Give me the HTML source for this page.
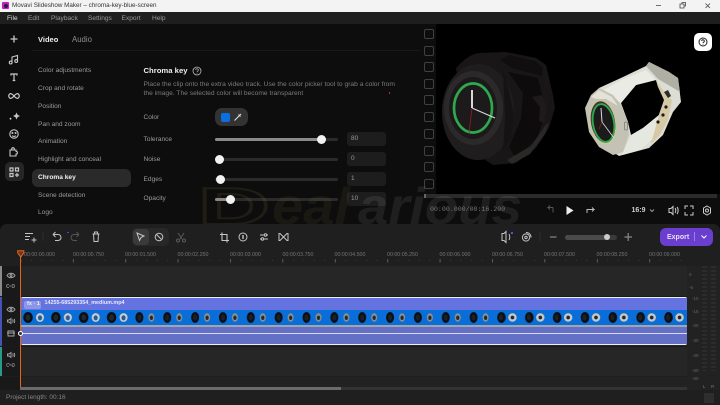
<!DOCTYPE html>
<html><head><meta charset="utf-8"><style>
html,body{margin:0;padding:0;background:#0d0d0d;}
body{width:720px;height:405px;position:relative;overflow:hidden;font-family:"Liberation Sans",sans-serif;}
.a{position:absolute;white-space:nowrap;line-height:1;}
.m{font-size:6.6px;color:#9a9a9a;margin-top:1px;}
.l{font-size:6.6px;color:#9a9a9a;margin-top:1px;}
.v{position:absolute;left:347px;width:39px;height:14px;background:#1d1d1d;border-radius:3px;color:#999;font-size:6.5px;line-height:14px;text-indent:4px;}
.t{position:absolute;left:215px;width:123px;height:3px;background:#2b2b2b;border-radius:2px;}
.f{position:absolute;left:215px;height:3px;background:#8a8a8a;border-radius:2px;}
.k{position:absolute;width:9px;height:9px;border-radius:50%;background:#f2f2f2;}
.c{position:absolute;left:423.5px;width:8px;height:8px;border:1px solid #404040;border-radius:2px;}
.r{position:absolute;top:252px;font-size:5.3px;color:#747474;line-height:7px;white-space:nowrap;}
.u{position:absolute;font-size:4.5px;color:#666;line-height:5px;white-space:nowrap;}
svg{position:absolute;overflow:visible;}
</style></head><body>
<!-- title bar -->
<div class="a" style="left:0;top:0;width:720px;height:12px;background:#f3f3f3;"></div>
<div class="a" style="left:2px;top:2px;width:7px;height:7px;background:#c020c0;border-radius:1px;"></div>
<div class="a" style="left:3.5px;top:3.5px;width:4px;height:4px;background:#3a1050;border-radius:50%;"></div>
<div class="a" style="left:12px;top:3px;font-size:6.3px;color:#333;">Movavi Slideshow Maker – chroma-key-blue-screen</div>
<svg style="left:0;top:0" width="720" height="12"><path d="M656 5.5h5M680 4h4v4h-4zM682 4v-1.500h3.500v3.500h-1.500M705.500 3.500l4.500 4.500M710 3.500l-4.500 4.500" fill="none" stroke="#444" stroke-width=".8"/></svg>
<!-- menu -->
<div class="a" style="left:0;top:12px;width:720px;height:12px;background:#1e1e1e;"></div>
<div class="a m" style="left:7px;top:15px;color:#ddd;">File</div>
<div class="a m" style="left:28px;top:15px;">Edit</div>
<div class="a m" style="left:51px;top:15px;">Playback</div>
<div class="a m" style="left:88px;top:15px;">Settings</div>
<div class="a m" style="left:121.5px;top:15px;">Export</div>
<div class="a m" style="left:152px;top:15px;">Help</div>
<!-- sidebar -->
<div class="a" style="left:5px;top:162px;width:19px;height:19px;background:#262626;border-radius:5px;"></div>
<svg style="left:0;top:24px" width="30" height="165" fill="none" stroke="#c8c8c8" stroke-width="1.1">
<path d="M10.5 15h7M14 11.500v7" stroke-width="1.3"/>
<path d="M12 38.500v-5.500l5.500-1.500v5.500"/><circle cx="10.700" cy="38.500" r="1.400"/><circle cx="16.200" cy="37" r="1.400"/>
<path d="M11 51.500v-1.500h6v1.500M14 50v6.500M12.700 56.500h2.600" stroke-width="1.2"/>
<path d="M14 72c-2-2.500-3.500-2.800-4.500-1.800s-1 2.600 0 3.600 2.500.7 4.500-1.800c2-2.500 3.500-2.800 4.500-1.800s1 2.600 0 3.600-2.500.7-4.500-1.800z" stroke-width="1.2"/>
<path d="M16.500 88.500l1.100 2.400 2.400 1.100-2.400 1.100-1.100 2.400-1.100-2.400-2.400-1.100 2.400-1.100zM10.500 93.500l1.200 1.200-1.200 1.200-1.200-1.200z" fill="#c8c8c8" stroke="none"/>
<circle cx="14" cy="110" r="4.200"/><circle cx="12.400" cy="109" r=".5" fill="#c8c8c8"/><circle cx="15.600" cy="109" r=".5" fill="#c8c8c8"/><path d="M12.200 111.700c1 1 2.600 1 3.600 0"/>
<path d="M10 126h6v1.300a1.400 1.400 0 0 1 0 2.800v1.900h-6zM11.700 126v-1a1.300 1.300 0 0 1 2.600 0v1"/>
<path d="M10 144h3v3h-3zM15.500 144h3v3h-3zM10 149.500h3v3h-3zM17 149v4M15 151h4" stroke-width="1.200"/>
</svg>
<!-- tabs -->
<div class="a" style="left:38px;top:35.5px;font-size:7.5px;font-weight:bold;color:#eee;">Video</div>
<div class="a" style="left:72px;top:35.5px;font-size:7.8px;color:#8e8e8e;">Audio</div>
<div class="a" style="left:32px;top:50px;width:388px;height:1px;background:#191919;"></div>
<!-- list -->
<div class="a" style="left:32px;top:169px;width:99px;height:17.5px;background:#2a2a2a;border-radius:6px;"></div>
<div class="a l" style="left:38px;top:67px;">Color adjustments</div>
<div class="a l" style="left:38px;top:85px;">Crop and rotate</div>
<div class="a l" style="left:38px;top:103px;">Position</div>
<div class="a l" style="left:38px;top:120.5px;">Pan and zoom</div>
<div class="a l" style="left:38px;top:138px;">Animation</div>
<div class="a l" style="left:38px;top:156px;">Highlight and conceal</div>
<div class="a l" style="left:38px;top:174px;color:#eee;font-weight:bold;">Chroma key</div>
<div class="a l" style="left:38px;top:192px;">Scene detection</div>
<div class="a l" style="left:38px;top:209px;">Logo</div>
<!-- chroma panel -->
<div class="a" style="left:143.5px;top:67px;font-size:7.7px;font-weight:bold;color:#eee;">Chroma key</div>
<svg style="left:191.5px;top:66px" width="10" height="10" fill="none" stroke="#bbb" stroke-width=".8"><circle cx="5" cy="5" r="4"/><path d="M3.700 4a1.300 1.300 0 1 1 1.900 1.200c-.5.300-.6.500-.6 1M5 7.300v.5"/></svg>
<div class="a" style="left:143.5px;top:82px;font-size:6.68px;color:#7b7b7b;">Place the clip onto the extra video track. Use the color picker tool to grab a color from</div>
<div class="a" style="left:143.5px;top:91px;font-size:6.68px;color:#7b7b7b;">the image. The selected color will become transparent</div>
<div class="a" style="left:389px;top:92px;width:1px;height:1.5px;background:#c22;"></div>
<div class="a l" style="left:143.5px;top:113.5px;">Color</div>
<div class="a" style="left:215px;top:108px;width:33px;height:18px;background:#333;border-radius:7px;"></div>
<div class="a" style="left:221px;top:113px;width:8.5px;height:8.5px;background:#0a6fe0;border-radius:2px;"></div>
<svg style="left:233px;top:112px" width="10" height="10" fill="none" stroke="#ddd" stroke-width="1.1"><path d="M1.500 8.500l5-5M5.500 2.500l2 2M6.500 3.500l1.500-1.500"/></svg>
<div class="a l" style="left:143.5px;top:135.5px;">Tolerance</div>
<div class="a l" style="left:143.5px;top:155.5px;">Noise</div>
<div class="a l" style="left:143.5px;top:175.5px;">Edges</div>
<div class="a l" style="left:143.5px;top:195px;">Opacity</div>
<div class="t" style="top:137.5px"></div><div class="f" style="top:137.5px;width:106px"></div><div class="k" style="left:317px;top:134.5px"></div>
<div class="t" style="top:157.5px"></div><div class="k" style="left:214.5px;top:154.5px"></div>
<div class="t" style="top:177.5px"></div><div class="k" style="left:215.5px;top:174.5px"></div>
<div class="t" style="top:197.5px"></div><div class="f" style="top:197.5px;width:15px"></div><div class="k" style="left:226px;top:194.5px"></div>
<div class="v" style="top:132px">80</div><div class="v" style="top:152px">0</div><div class="v" style="top:172px">1</div><div class="v" style="top:192px">10</div>
<!-- film strip -->
<div class="c" style="top:28.5px"></div><div class="c" style="top:45.5px"></div><div class="c" style="top:62px"></div><div class="c" style="top:78.5px"></div><div class="c" style="top:95px"></div><div class="c" style="top:112px"></div><div class="c" style="top:128.5px"></div><div class="c" style="top:145.5px"></div><div class="c" style="top:162px"></div><div class="c" style="top:179px"></div>
<!-- preview -->
<div class="a" style="left:436px;top:24px;width:284px;height:170px;background:#000;"></div>
<svg style="left:0;top:0" width="720" height="200">
 <!-- dark watch strap -->
 <path d="M456 68C465 58 472 54 479 53L506 52 536 58 546 65 553 95 555 108 549 128 536 148 516 163 493 165 470 150z" fill="#181617"/>
 <path d="M500 60l9-5 26 6 8 7-1 8-30-8z" fill="#100e0f"/>
 <path d="M508 72l30 6 6 24 1 14-8 22-14 14-8 5-6-10 12-28 2-26z" fill="#0d0b0c"/>
 <path d="M507 160l24-14 14-20 4-4-4 12-15 20-18 10z" fill="#2a2927"/>
 <path d="M532 97l10-2 5 12-3 16-5-2 1-14z" fill="#1e1a1b"/>
 <!-- dark watch case -->
 <ellipse cx="478" cy="112" rx="36" ry="48" fill="#1f1d1e"/>
 <path d="M503 70l6 22 5 22-3 24-8 12 2-30-1-26z" fill="#151314"/>
 <ellipse cx="473.500" cy="108" rx="29.500" ry="37" fill="#2b292a"/>
 <ellipse cx="473" cy="108" rx="24" ry="31" fill="#1b191a"/>
 <ellipse cx="473" cy="108" rx="19" ry="24.500" fill="#1c1a1b" stroke="#2fa84f" stroke-width="2.700"/>
 <path d="M472 108V90" stroke="#d8d8d8" stroke-width="2"/>
 <path d="M472 108l23 10" stroke="#d8d8d8" stroke-width="1.200"/>
 <path d="M472 108l-3 25" stroke="#b01c20" stroke-width=".7"/>
 <!-- white watch -->
 <path fill-rule="evenodd" d="M599 88L623 77 646 66 649 62 669 72 678 78 681 102 673 112 663 135 649 148 619 156 610 150 599 100zM621 103L628 122 631 135 643 128 659 115 666 95 658 87 656 80 636 85z" fill="#dcddd4"/>
 <path d="M600 92L623 79 646 70 656 80 636 85 621 103 612 95z" fill="#e9ebe4"/>
 <path d="M646 66L649 62 669 72 678 78 680 92 670 86 658 79z" fill="#b0afa4"/>
 <path d="M656 80L666 95 672 100 668 120 660 135 652 143 645 140 657 120 664 100 658 87z" fill="#d7c9a6"/>
 <path d="M631 135L643 128 659 115 652 140 640 150 622 155z" fill="#e4e8de"/>
 <circle cx="666" cy="107" r="1.600" fill="#1a1a1a"/><circle cx="663" cy="115" r="1.600" fill="#1a1a1a"/><circle cx="658" cy="122" r="1.600" fill="#1a1a1a"/>
 <path d="M664 92l4 6 3-2-3-6z" fill="#2c2c2c"/>
 <path d="M585 108L591 95 599 88 613 95 621 105 628 122 629 135 623 152 613 155 599 147 589 132z" fill="#c4c2b4"/>
 <path d="M591 97L599 90 612 97 618 106 606 99 596 99z" fill="#e4e2d6"/>
 <ellipse cx="603" cy="122" rx="13" ry="22.500" transform="rotate(-10 603 122)" fill="#d3c69a"/>
 <ellipse cx="603" cy="122" rx="12" ry="21" transform="rotate(-10 603 122)" fill="#3c3b39"/>
 <ellipse cx="603.500" cy="123" rx="10.500" ry="19" transform="rotate(-10 603.500 123)" fill="#1c1b1b" stroke="#2fa84f" stroke-width="1.800"/>
 <path d="M602 122l-1-14" stroke="#ddd" stroke-width="1"/><path d="M602 122l12 16" stroke="#ddd" stroke-width=".8"/><path d="M602 122l-3 7" stroke="#b01c20" stroke-width=".6"/>
 <rect x="624.500" y="122" width="3" height="8" rx="1.300" fill="none" stroke="#77756c" stroke-width=".7"/>
</svg>
<div class="a" style="left:694px;top:33px;width:18px;height:18px;background:#fff;border-radius:5px;"></div>
<svg style="left:698px;top:37px" width="10" height="10" fill="none" stroke="#222" stroke-width="1"><circle cx="5" cy="5" r="4"/><path d="M3.700 4a1.300 1.300 0 1 1 1.900 1.200c-.5.300-.6.500-.6 1M5 7.200v.6"/></svg>
<!-- progress -->
<div class="a" style="left:424px;top:194px;width:293px;height:4px;background:#2b2b2b;"></div>
<div class="a" style="left:424px;top:194px;width:1.5px;height:4px;background:#666;"></div>
<!-- watermark -->
<svg style="left:0;top:0" width="720" height="224">
 <text x="198" y="224" font-family="Liberation Sans, sans-serif" font-weight="bold" font-size="52" textLength="72" lengthAdjust="spacingAndGlyphs" fill="none" stroke="rgba(150,125,70,.14)" stroke-width="2">D</text>
 <text x="272" y="224" font-family="Liberation Sans, sans-serif" font-weight="bold" font-style="italic" font-size="52" textLength="78" lengthAdjust="spacingAndGlyphs" fill="rgba(150,125,70,.1)">eal</text>
 <text x="358" y="224" font-family="Liberation Sans, sans-serif" font-weight="bold" font-style="italic" font-size="52" textLength="164" lengthAdjust="spacingAndGlyphs" fill="rgba(255,255,255,.08)">arious</text>
</svg>
<div class="a" style="left:430px;top:207px;font-family:'Liberation Mono',monospace;font-size:6.6px;color:#777;">00:00.000/00:16.200</div>
<svg style="left:0;top:200px" width="720" height="22" fill="none" stroke="#888" stroke-width="1">
 <path d="M553 7.500h-5l2-2M548 7.500l2 2M553 7.500v5" stroke="#555"/>
 <path d="M566.500 6l7 4.500-7 4.500z" fill="#eee" stroke="none"/>
 <path d="M587 13v-3.500h7l-2-2M594 9.500l-2 2" stroke="#bbb"/>
 <path d="M650 9.500l2 2 2-2" stroke="#999"/>
 <path d="M669 8.500h2l2-2v8l-2-2h-2zM675 8c1 1 1 4 0 5M677 7c1.500 1.500 1.500 5.500 0 7" stroke="#ccc"/>
 <path d="M685 9v-3h3M690 6h3v3M693 12v3h-3M688 15h-3v-3" stroke="#ccc"/>
 <path d="M707 6l3.500 2v5l-3.500 2-3.500-2v-5z" stroke="#ccc"/><circle cx="707" cy="10.500" r="1.500" stroke="#ccc"/>
</svg>
<div class="a" style="left:631.5px;top:207px;font-size:7px;font-weight:bold;color:#ccc;">16:9</div>
<!-- timeline -->
<div class="a" style="left:0;top:224px;width:720px;height:42px;background:#1f1f1f;border-radius:7px 7px 0 0;"></div>
<div class="a" style="left:132px;top:228px;width:37px;height:18px;background:#282828;border-radius:5px;"></div>
<div class="a" style="left:133px;top:229px;width:15.5px;height:16px;background:#3a3a3a;border-radius:4px;"></div>
<svg style="left:0;top:226px" width="720" height="22" fill="none" stroke="#c4c4c4" stroke-width="1">
 <path d="M25 7.500h8M25 10.500h5M25 13.500h4M31.500 14h5M34 11.500v5"/>
 <path d="M43 6v9" stroke="#2c2c2c"/>
 <path d="M53 8.500h5a3 3 0 0 1 0 6h-3M53 8.500l2.500-2.500M53 8.500l2.500 2.500"/>
 <path d="M79 8.500h-5a3 3 0 0 0 0 6h3M79 8.500l-2.500-2.500M79 8.500l-2.500 2.500" stroke="#555"/>
 <path d="M92.500 8h7M93.500 8l.5 7.500h4l.5-7.500M94.500 8V6h3v2"/>
 <path d="M137 7l7 3-3 1.500-1.500 3z"/>
 <circle cx="159" cy="11" r="3.800"/><path d="M156.500 8.500l5 5"/>
 <path d="M178 7l4 6M184 7l-4 6" stroke="#5a5a5a"/><circle cx="178" cy="14.500" r="1.500" stroke="#5a5a5a"/><circle cx="184" cy="14.500" r="1.500" stroke="#5a5a5a"/>
 <path d="M222 6.500v8h7M220 8.500h7v8" stroke-width="1.100"/>
 <circle cx="243" cy="11" r="4"/><path d="M243 9v4" stroke-width="1.400"/>
 <path d="M260 9h8M260 13h8"/><circle cx="265.500" cy="9" r="1.200" fill="#1f1f1f"/><circle cx="262.500" cy="13" r="1.200" fill="#1f1f1f"/>
 <path d="M283.500 11l-3.500-3.500h-1v7h1zM283.500 11l3.500-3.500h1v7h-1z"/>
 <path d="M504 7.500h-2v7h2l2 2v-11zM509 8c1 1.500 1 4.500 0 6"/>
 <circle cx="526" cy="11.500" r="3.600"/><path d="M526 6.500c3 0 5 2 5 5"/><circle cx="526" cy="11.500" r="1.200"/>
 <path d="M540 6v9" stroke="#2c2c2c"/>
 <path d="M550 11h6.500" stroke="#888" stroke-width="1.200"/>
 <path d="M624.500 11h7.500M628.200 7v8" stroke="#888" stroke-width="1.200"/>
</svg>
<div class="a" style="left:511px;top:232px;width:1.5px;height:1.5px;background:#7a3de0;"></div>
<div class="a" style="left:67px;top:231.5px;width:1.5px;height:1.5px;background:#6a35d8;"></div>
<div class="a" style="left:565px;top:234.5px;width:52px;height:5px;background:#3a3a3a;border-radius:3px;"></div>
<div class="a" style="left:565px;top:234.5px;width:42px;height:5px;background:#4a4a4a;border-radius:3px;"></div>
<div class="a" style="left:604px;top:234px;width:6px;height:6px;background:#ccc;border-radius:3px;"></div>
<div class="a" style="left:660px;top:228px;width:53px;height:18px;background:#6a3fd0;border-radius:6px;"></div>
<div class="a" style="left:667px;top:234px;font-size:7px;font-weight:bold;color:#e8e0fa;">Export</div>
<div class="a" style="left:694px;top:232px;width:.7px;height:9px;background:#9a80e0;"></div>
<svg style="left:700px;top:234px" width="8" height="6" fill="none" stroke="#fff" stroke-width="1"><path d="M1.500 1.500l2.500 2.500 2.500-2.500"/></svg>
<!-- ruler -->
<div class="r" style="left:24px">00:00:00.000</div><div class="r" style="left:73px">00:00:00.750</div><div class="r" style="left:125px">00:00:01.500</div><div class="r" style="left:177.5px">00:00:02.250</div><div class="r" style="left:230px">00:00:03.000</div><div class="r" style="left:282.5px">00:00:03.750</div><div class="r" style="left:334.5px">00:00:04.500</div><div class="r" style="left:387px">00:00:05.250</div><div class="r" style="left:439.5px">00:00:06.000</div><div class="r" style="left:492px">00:00:06.750</div><div class="r" style="left:544px">00:00:07.500</div><div class="r" style="left:596.5px">00:00:08.250</div><div class="r" style="left:649px">00:00:09.000</div>
<svg style="left:0;top:258px" width="690" height="8"><defs><pattern id="tk" x="20.5" width="52.4" height="8" patternUnits="userSpaceOnUse"><rect x="0" y="1" width=".7" height="3.5" fill="#777"/><rect x="10.5" y="2" width=".7" height="1" fill="#444"/><rect x="21" y="2" width=".7" height="1" fill="#444"/><rect x="31.5" y="2" width=".7" height="1" fill="#444"/><rect x="42" y="2" width=".7" height="1" fill="#444"/></pattern></defs><rect x="20" width="670" height="8" fill="url(#tk)"/></svg>
<!-- tracks -->
<div class="a" style="left:0;top:266px;width:720px;height:124px;background:#262626;"></div>
<div class="a" style="left:0;top:266px;width:20px;height:124px;background:#191919;"></div>
<div class="a" style="left:0;top:266px;width:2px;height:30px;background:#8a8a8a;"></div>
<div class="a" style="left:0;top:297px;width:2px;height:49px;background:#4553b8;"></div>
<div class="a" style="left:0;top:347px;width:2px;height:29px;background:#2a9a86;"></div>
<div class="a" style="left:0;top:296px;width:687px;height:1px;background:#1a1a1a;"></div>
<div class="a" style="left:0;top:346px;width:687px;height:1px;background:#1a1a1a;"></div>
<div class="a" style="left:0;top:376px;width:687px;height:1px;background:#1e1e1e;"></div>
<div class="a" style="left:20px;top:377px;width:667px;height:10px;background:#222;"></div>
<svg style="left:0;top:266px" width="20" height="120" fill="none" stroke="#a8a8a8" stroke-width=".9">
 <path d="M7 9.500c2-3 6-3 8 0-2 3-6 3-8 0z"/><circle cx="11" cy="9.500" r="1"/>
 <path d="M9 21.500h-1a1.500 1.500 0 0 1 0-3h1M12 18.500h1a1.500 1.500 0 0 1 0 3h-1M9 20h4" stroke="#777"/>
 <path d="M7 43.500c2-3 6-3 8 0-2 3-6 3-8 0z"/><circle cx="11" cy="43.500" r="1"/>
 <path d="M7.500 54h1.500l2-1.500v5l-2-1.500h-1.500zM12.500 53.500c.8.800.8 2.200 0 3M14 53c1 1 1 3 0 4"/>
 <path d="M7 67h8M8 67v-2h6v2M8 67v3h6v-3"/>
 <path d="M7.500 88h1.500l2-1.500v5l-2-1.500h-1.500zM12.500 87.500c.8.800.8 2.200 0 3M14 87c1 1 1 3 0 4"/>
 <path d="M9 100.500h-1a1.500 1.500 0 0 1 0-3h1M12 97.500h1a1.500 1.500 0 0 1 0 3h-1M9 99h4M8 97l6 4" stroke="#666"/>
</svg>
<!-- clip -->
<div class="a" style="left:21px;top:297px;width:666px;height:48px;background:#6470c6;border-radius:2px;overflow:hidden;">
 <div style="position:absolute;left:0;top:0;width:666px;height:1px;background:#eee;"></div>
 <div style="position:absolute;left:0;top:1px;width:666px;height:12px;background:#6473e0;"></div>
 <div style="position:absolute;left:0;top:13px;width:666px;height:15px;background:#0a6ed8;"></div>
 <div style="position:absolute;left:0;top:28px;width:666px;height:2px;background:#a5a5a8;"></div>
 <div style="position:absolute;left:0;top:36px;width:666px;height:1px;background:#d8daf4;"></div>
 <div style="position:absolute;left:0;top:47px;width:666px;height:1px;background:#eee;"></div>
</div>
<svg style="left:21px;top:310px" width="666" height="15"><defs>
<pattern id="th" x="0" width="27.85" height="15" patternUnits="userSpaceOnUse"><ellipse cx="7" cy="7.500" rx="4.800" ry="5.500" fill="#0c0e12"/><ellipse cx="7" cy="7.500" rx="2.300" ry="3" fill="#1e2a30"/><ellipse cx="19" cy="7.500" rx="4" ry="4.400" fill="#cfd0cc"/><ellipse cx="19" cy="7.800" rx="2.100" ry="2.600" fill="#2a5c92"/></pattern>
<pattern id="th2" x="0" width="27.85" height="15" patternUnits="userSpaceOnUse"><ellipse cx="7" cy="7.500" rx="4" ry="5.500" fill="#0c0e12"/><ellipse cx="7" cy="7.500" rx="2" ry="3" fill="#1c2026"/><ellipse cx="19" cy="7.500" rx="3" ry="4.200" fill="#8f908c"/><ellipse cx="19" cy="7.800" rx="1.600" ry="2.200" fill="#23282c"/></pattern>
<pattern id="th3" x="0" width="27.85" height="15" patternUnits="userSpaceOnUse"><ellipse cx="7" cy="7.500" rx="4.300" ry="5.500" fill="#0c0e12"/><ellipse cx="6.500" cy="7.500" rx="2" ry="3" fill="#1e2024"/><ellipse cx="18" cy="7.500" rx="4.200" ry="4.200" fill="#c9cac6"/><ellipse cx="18" cy="7.500" rx="1.800" ry="1.900" fill="#22262a"/></pattern>
</defs><rect width="111.400" height="15" fill="url(#th)"/><rect x="111.400" width="362" height="15" fill="url(#th2)"/><rect x="473.400" width="192.600" height="15" fill="url(#th3)"/></svg>
<div class="a" style="left:24px;top:300.5px;width:17px;height:8px;background:#8c96e8;border-radius:2px;"></div>
<div class="a" style="left:27px;top:301.5px;font-size:5.5px;font-weight:bold;color:#eee;">fx · 1</div>
<div class="a" style="left:44.5px;top:301.3px;font-size:5.4px;font-weight:bold;color:#e6e8fa;">14255-685293354_medium.mp4</div>
<!-- playhead -->
<div class="a" style="left:20px;top:253px;width:1px;height:135px;background:#e5641c;"></div>
<svg style="left:17px;top:250px" width="8" height="8"><path d="M.7.700h6.100v2.300L3.750 7 .7 3z" fill="#6a3a1e" stroke="#e5641c"/></svg>
<div class="a" style="left:18px;top:331px;width:5px;height:5px;border:1px solid #fff;border-radius:50%;background:#333;box-sizing:border-box;"></div>
<!-- scroll -->
<div class="a" style="left:20px;top:387px;width:667px;height:3px;background:#333;"></div>
<div class="a" style="left:20px;top:387px;width:321px;height:3px;background:#6b6b6b;"></div>
<!-- vu -->
<div class="a" style="left:687px;top:266px;width:33px;height:124px;background:#222;"></div>
<svg style="left:687px;top:266px" width="33" height="139"><defs><pattern id="vu" width="5" height="4" patternUnits="userSpaceOnUse"><rect width="5" height="2" fill="#2c2c2c"/></pattern></defs><rect x="15" width="5" height="105" fill="url(#vu)"/><rect x="24" width="5" height="105" fill="url(#vu)"/></svg>
<div class="u" style="left:689px;top:272px;">0</div>
<div class="u" style="left:689px;top:285px;">-5</div>
<div class="u" style="left:692px;top:296px;">-10</div>
<div class="u" style="left:692px;top:309px;">-15</div>
<div class="u" style="left:692px;top:323px;">-20</div>
<div class="u" style="left:692px;top:338px;">-30</div>
<div class="u" style="left:692px;top:353px;">-40</div>
<div class="u" style="left:692px;top:368px;">-50</div>
<div class="u" style="left:692px;top:376px;">-60</div>
<div class="u" style="left:703px;top:384px;color:#777;">L</div>
<div class="u" style="left:711px;top:384px;color:#777;">R</div>
<!-- status -->
<div class="a" style="left:0;top:390px;width:720px;height:15px;background:#1f1f1f;"></div>
<div class="a" style="left:6px;top:395px;font-size:6.5px;color:#858585;">Project length: 00:16</div>
<div class="a" style="left:704px;top:393px;width:10px;height:10px;background:#2e2e2e;"></div>
</body></html>
